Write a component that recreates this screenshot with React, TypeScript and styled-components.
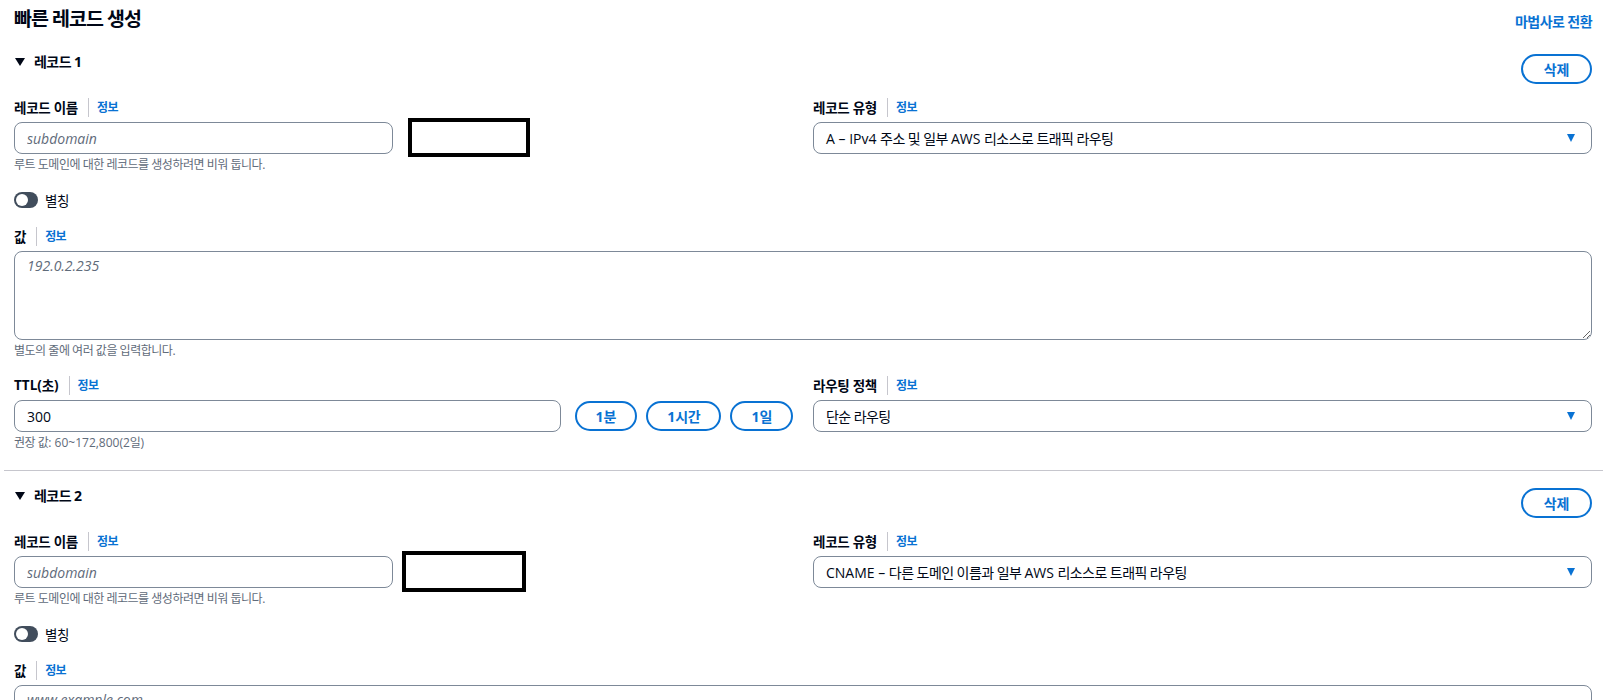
import styled, { createGlobalStyle } from "styled-components";

/* ===========================
   Global
   =========================== */
const GlobalStyle = createGlobalStyle`
  * { box-sizing: border-box; }
  body {
    margin: 0;
    background: #ffffff;
    color: #000716;
    font-family: "Open Sans", "Noto Sans CJK KR", sans-serif;
  }
`;

/* ===========================
   Styled
   =========================== */
const Page = styled.div`
  width: 100%;
  padding: 7px 4px 40px;
`;

const Header = styled.header`
  display: flex;
  align-items: center;
  justify-content: space-between;
  height: 24px;
  padding: 0 11px 0 10px;
  margin-bottom: 21px;
`;

const Title = styled.h1`
  margin: 0;
  font-size: 19.5px;
  line-height: 24px;
  font-weight: 700;
  letter-spacing: -0.05em;
`;

const WizardLink = styled.a`
  margin-top: 4px;
  color: #0972d3;
  font-size: 14px;
  font-weight: 700;
  letter-spacing: -0.04em;
  text-decoration: none;
  cursor: pointer;
`;

// latin runs inside korean text keep their natural spacing
const Latin = styled.span`
  letter-spacing: 0;
`;

const Section = styled.section<{ $divided?: boolean }>`
  padding: ${(p) => (p.$divided ? "15px 11px 19px 10px" : "0 11px 19px 10px")};
  border-top: ${(p) => (p.$divided ? "1px solid #c6c6cd" : "none")};
`;

const SectionHead = styled.div`
  display: flex;
  align-items: flex-start;
  justify-content: space-between;
  margin-bottom: 12px;
`;

const Heading = styled.h2`
  display: flex;
  align-items: center;
  gap: 9px;
  margin: 0;
  padding-left: 1px;
  font-size: 14px;
  line-height: 20px;
  font-weight: 700;
  letter-spacing: -0.04em;
`;

const ExpandCaret = styled.span`
  width: 0;
  height: 0;
  border-left: 5px solid transparent;
  border-right: 5px solid transparent;
  border-top: 8px solid #000716;
`;

const PillButton = styled.button<{ $top?: number; $pad?: number }>`
  height: 30px;
  margin-top: ${(p) => p.$top ?? 0}px;
  padding: 0 ${(p) => p.$pad ?? 19}px;
  border: 2px solid #0972d3;
  border-radius: 20px;
  background: #ffffff;
  color: #0972d3;
  font-family: inherit;
  font-size: 14px;
  font-weight: 700;
  letter-spacing: -0.02em;
  cursor: pointer;
  flex-shrink: 0;
`;

const Columns = styled.div<{ $gapTop?: number }>`
  display: grid;
  grid-template-columns: 1fr 1fr;
  column-gap: 20px;
  margin-top: ${(p) => p.$gapTop ?? 0}px;
`;

const Field = styled.div<{ $gapTop?: number }>`
  margin-top: ${(p) => p.$gapTop ?? 0}px;
  min-width: 0;
`;

const Label = styled.div`
  display: flex;
  align-items: center;
  height: 22px;
  margin-bottom: 4px;
  font-size: 13.5px;
  font-weight: 700;
  letter-spacing: -0.02em;
`;

const LabelSep = styled.span`
  width: 1px;
  height: 19px;
  margin: 0 8px 0 10px;
  background: #c6c6cd;
`;

const InfoLink = styled.a`
  color: #0972d3;
  font-size: 12px;
  font-weight: 700;
  letter-spacing: -0.05em;
  cursor: pointer;
`;

const TextInput = styled.input<{ $width?: number }>`
  width: ${(p) => (p.$width ? `${p.$width}px` : "100%")};
  height: 32px;
  padding: 0 12px;
  border: 1px solid #7d8998;
  border-radius: 8px;
  background: #ffffff;
  color: #000716;
  font-family: "Open Sans", "Noto Sans CJK KR", sans-serif;
  font-size: 14px;
  outline: none;
  &::placeholder {
    color: #5f6b7a;
    font-style: italic;
  }
`;

const NameRow = styled.div`
  display: flex;
  align-items: flex-start;
`;

const Redaction = styled.div<{ $left: number; $top: number; $w: number; $h: number }>`
  flex-shrink: 0;
  width: ${(p) => p.$w}px;
  height: ${(p) => p.$h}px;
  margin-left: ${(p) => p.$left}px;
  margin-top: ${(p) => -p.$top}px;
  margin-bottom: ${(p) => -(p.$h - 32 - p.$top)}px;
  border: 4px solid #000000;
`;

const Hint = styled.div`
  margin-top: 3px;
  color: #5f6b7a;
  font-size: 12px;
  line-height: 16px;
  letter-spacing: -0.04em;
`;

const ToggleRow = styled.label`
  display: flex;
  align-items: center;
  gap: 7px;
  height: 20px;
  margin-top: 17px;
  font-size: 13.5px;
  letter-spacing: -0.04em;
`;

const Switch = styled.span`
  position: relative;
  width: 24px;
  height: 16px;
  border-radius: 8px;
  background: #414d5c;
  &::after {
    content: "";
    position: absolute;
    left: 2px;
    top: 2px;
    width: 12px;
    height: 12px;
    border-radius: 50%;
    background: #ffffff;
  }
`;

const TextArea = styled.textarea`
  display: block;
  width: 100%;
  height: 89px;
  padding: 4px 12px;
  border: 1px solid #7d8998;
  border-radius: 8px;
  color: #000716;
  font-family: "Open Sans", "Noto Sans CJK KR", sans-serif;
  font-size: 14px;
  line-height: 20px;
  resize: vertical;
  outline: none;
  &::placeholder {
    color: #5f6b7a;
    font-style: italic;
  }
`;

const TtlControls = styled.div`
  display: flex;
  align-items: center;
  gap: 9px;
  & > input {
    flex: 1;
    margin-right: 5px;
  }
`;

const Select = styled.div`
  display: flex;
  align-items: center;
  justify-content: space-between;
  height: 32px;
  padding: 0 16px 0 12px;
  border: 1px solid #7d8998;
  border-radius: 8px;
  font-size: 14px;
  letter-spacing: -0.04em;
  cursor: pointer;
`;

const SelectCaret = styled.span`
  width: 0;
  height: 0;
  border-left: 4.5px solid transparent;
  border-right: 4.5px solid transparent;
  border-top: 8px solid #0972d3;
`;

/* ===========================
   Data
   =========================== */
type RecordDef = {
  id: number;
  type: React.ReactNode;
  valuePlaceholder: string;
  box: { left: number; top: number; w: number; h: number };
};

const records: RecordDef[] = [
  {
    id: 1,
    type: (
      <>
        <Latin>A – IPv4 </Latin>주소 및 일부 <Latin>AWS </Latin>리소스로 트래픽 라우팅
      </>
    ),
    valuePlaceholder: "192.0.2.235",
    box: { left: 15, top: 4, w: 122, h: 39 },
  },
  {
    id: 2,
    type: (
      <>
        <Latin>CNAME – </Latin>다른 도메인 이름과 일부 <Latin>AWS </Latin>리소스로 트래픽 라우팅
      </>
    ),
    valuePlaceholder: "www.example.com",
    box: { left: 9, top: 5, w: 124, h: 41 },
  },
];

function FieldLabel({ children }: { children: React.ReactNode }) {
  return (
    <Label>
      {children}
      <LabelSep />
      <InfoLink>정보</InfoLink>
    </Label>
  );
}

function RecordSection({ rec, divided }: { rec: RecordDef; divided: boolean }) {
  return (
    <Section $divided={divided}>
      <SectionHead>
        <Heading>
          <ExpandCaret />
          <span>
            레코드 <Latin>{rec.id}</Latin>
          </span>
        </Heading>
        <PillButton $top={2} $pad={21}>
          삭제
        </PillButton>
      </SectionHead>

      <Columns>
        <Field>
          <FieldLabel>레코드 이름</FieldLabel>
          <NameRow>
            <TextInput $width={379} placeholder="subdomain" />
            <Redaction $left={rec.box.left} $top={rec.box.top} $w={rec.box.w} $h={rec.box.h} />
          </NameRow>
          <Hint>루트 도메인에 대한 레코드를 생성하려면 비워 둡니다.</Hint>
        </Field>
        <Field>
          <FieldLabel>레코드 유형</FieldLabel>
          <Select>
            <span>{rec.type}</span>
            <SelectCaret />
          </Select>
        </Field>
      </Columns>

      <ToggleRow>
        <Switch />
        별칭
      </ToggleRow>

      <Field $gapTop={15}>
        <FieldLabel>값</FieldLabel>
        <TextArea placeholder={rec.valuePlaceholder} />
        <Hint>별도의 줄에 여러 값을 입력합니다.</Hint>
      </Field>

      <Columns $gapTop={15}>
        <Field>
          <FieldLabel>
            <Latin>TTL(</Latin>초<Latin>)</Latin>
          </FieldLabel>
          <TtlControls>
            <TextInput defaultValue="300" />
            <PillButton>
              <Latin>1</Latin>분
            </PillButton>
            <PillButton>
              <Latin>1</Latin>시간
            </PillButton>
            <PillButton>
              <Latin>1</Latin>일
            </PillButton>
          </TtlControls>
          <Hint>
            권장 값<Latin>: 60~172,800(2</Latin>일<Latin>)</Latin>
          </Hint>
        </Field>
        <Field>
          <FieldLabel>라우팅 정책</FieldLabel>
          <Select>
            <span>단순 라우팅</span>
            <SelectCaret />
          </Select>
        </Field>
      </Columns>
    </Section>
  );
}

/* ===========================
   Component
   =========================== */
export default function App() {
  return (
    <>
      <GlobalStyle />
      <Page>
        <Header>
          <Title>빠른 레코드 생성</Title>
          <WizardLink>마법사로 전환</WizardLink>
        </Header>

        {records.map((rec, i) => (
          <RecordSection key={rec.id} rec={rec} divided={i > 0} />
        ))}
      </Page>
    </>
  );
}
